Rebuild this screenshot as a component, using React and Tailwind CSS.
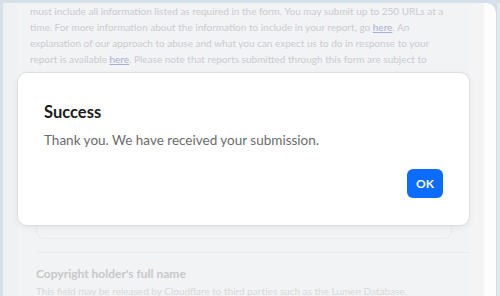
import React from 'react';

export default function App() {
  return (
    <div className="relative w-[500px] h-[296px] overflow-hidden bg-[#d6e0ea] pt-[3px] pl-[3px] flex font-['Lato','Noto_Sans',sans-serif]">
      {/* Page panel, washed out behind the dialog */}
      <div className="flex-1 h-[300px] flex bg-[#fdfdfd] rounded-tr-[10px] border-r border-[#cfdbe6]">
        <div className="w-[14px] bg-[#eff1f3]"></div>
        <div className="w-[453px] bg-[#f2f3f4]">
          <p className="px-[13px] text-[10px] leading-[16px] text-[#c9ccd1] whitespace-nowrap">
            must include all information listed as required in the form. You may submit up to 250 URLs at a
            <br />
            time. For more information about the information to include in your report, go{' '}
            <span className="underline text-[#a9aed6]">here</span>. An
            <br />
            explanation of our approach to abuse and what you can expect us to do in response to your
            <br />
            report is available <span className="underline text-[#a9aed6]">here</span>. Please note that reports submitted through this form are subject to
            <br />
            Cloudflare's privacy policy and that reports may be released by Cloudflare to third parties and
          </p>
          <div className="ml-[19px] mr-[18px] mt-[20px] h-[136px] rounded-[8px] border border-[#ebebeb]"></div>
          <div className="ml-[19px] mt-[13px] border-t border-[#ebebeb]"></div>
          <div className="ml-[19px] pt-[12px]">
            <div className="text-[12px] leading-[18px] font-bold text-[#c8c8c8]">Copyright holder's full name</div>
            <div className="text-[10px] leading-[16px] text-[#d8d8d8]">This field may be released by Cloudflare to third parties such as the Lumen Database.</div>
          </div>
        </div>
        <div className="w-[14px] bg-[#f4f4f4]"></div>
      </div>
      {/* Scrollbar strip */}
      <div className="w-[3px] h-full bg-[#e4e9ee]"></div>

      {/* Dialog */}
      <div className="absolute left-[17px] top-[72px] w-[453px] h-[154px] bg-white rounded-[10px] border border-[#dedede] shadow-[0_2px_6px_rgba(0,0,0,0.06)] px-[26px] pt-[26px]">
        <h2 className="text-[16.5px] leading-[26px] font-bold text-[#1b1b1b]">Success</h2>
        <p className="mt-[4px] text-[13.5px] leading-[22px] text-[#6b6b6b]">Thank you. We have received your submission.</p>
        <div className="flex justify-end mt-[18px]">
          <button className="w-[36px] h-[29px] rounded-[6px] bg-[#0b6cff] text-white text-[12px] font-bold">OK</button>
        </div>
      </div>
    </div>
  );
}
